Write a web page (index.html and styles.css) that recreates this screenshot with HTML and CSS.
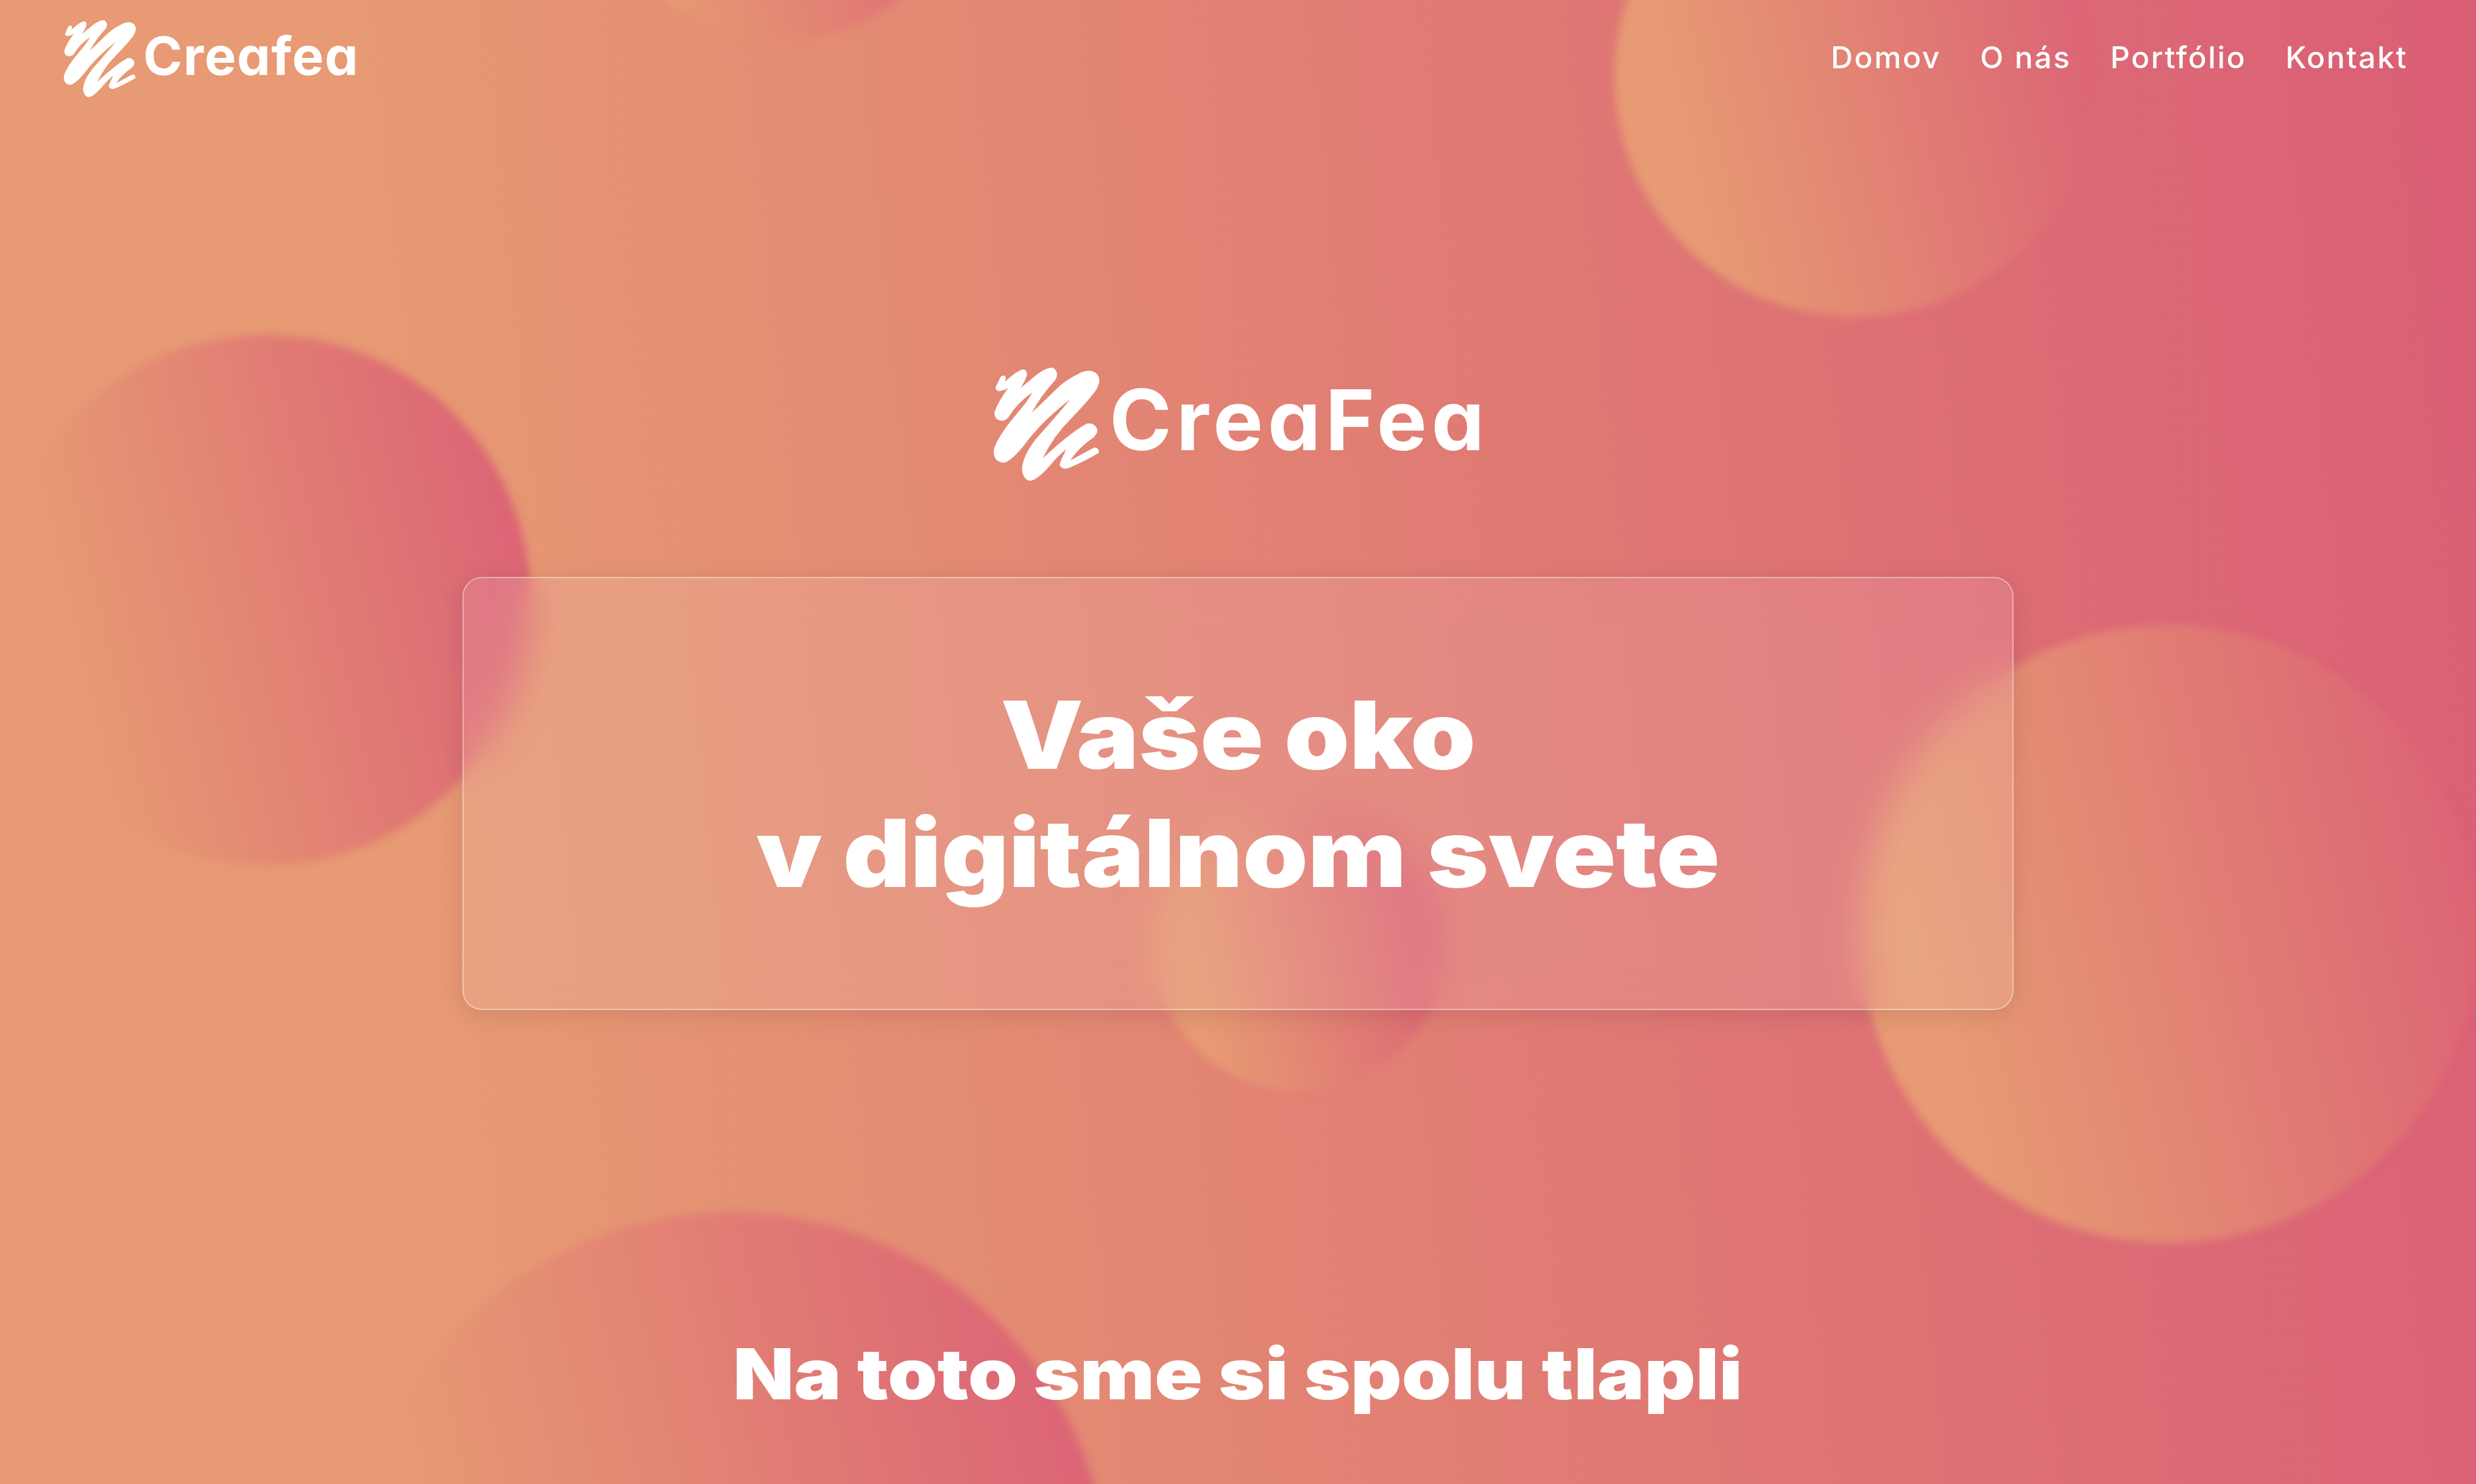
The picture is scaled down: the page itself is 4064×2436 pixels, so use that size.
FILE: index.html
```html
<!DOCTYPE html>
<html lang="sk">
<head>
    <meta charset="UTF-8">
    <meta name="viewport" content="width=device-width, initial-scale=1.0">
    <title>Creafea</title>
    <link rel="stylesheet" href="styles.css">
</head>
<body>
    <svg class="defs" width="0" height="0">
        <symbol id="scribble" viewBox="58 60 322 565" preserveAspectRatio="none">
            <path d="M90 103 Q80 104 76 125 L66 160 Q64 180 78 180 Q92 176 103 165 Q72 235 62 285 Q62 325 85 327 Q98 325 106 305 Q130 240 175 188 Q165 225 120 310 Q70 410 60 470 Q58 530 90 533 Q110 530 150 450 Q200 335 290 220 Q250 300 190 410 Q145 500 145 570 Q150 622 170 622 Q190 620 230 545 Q255 495 278 467 Q258 530 258 545 Q265 570 285 560 Q335 525 375 485 Q378 460 362 458 Q320 495 290 522 Q315 460 355 415 Q375 390 370 365 Q362 335 340 340 Q290 385 207 512 Q240 400 290 320 Q340 235 365 180 Q385 130 372 100 Q355 65 320 90 Q270 130 245 175 Q205 240 175 285 Q200 205 245 125 Q258 85 238 65 Q215 60 170 125 L140 165 Q155 130 160 100 Q160 70 145 74 Q125 85 93 135 Q100 108 90 103 Z"/>
        </symbol>
    </svg>

    <div class="page">
        <!-- background circles -->
        <div class="blob blob-top"></div>
        <div class="blob blob-corner"></div>
        <div class="blob blob-left"></div>
        <div class="blob blob-right"></div>
        <div class="blob blob-small"></div>
        <div class="blob blob-bottom"></div>

        <header class="topbar">
            <a class="logo logo-small" href="#">
                <svg class="logo-mark"><use href="#scribble"></use></svg>
                <span class="logo-text">Creafea</span>
            </a>
            <nav class="menu">
                <a href="#">Domov</a>
                <a href="#">O nás</a>
                <a href="#">Portfólio</a>
                <a href="#">Kontakt</a>
            </nav>
        </header>

        <main class="hero">
            <a class="logo logo-big" href="#">
                <svg class="logo-mark"><use href="#scribble"></use></svg>
                <span class="logo-text">CreaFea</span>
            </a>
            <section class="glass">
                <h1>Vaše oko<br>v digitálnom svete</h1>
            </section>
            <h2>Na toto sme si spolu tlapli</h2>
        </main>
    </div>
</body>
</html>
```

FILE: styles.css
```css
html, body{
    margin: 0;
    height: 100%;
}
body{
    font-family: "Inter", "Liberation Sans", sans-serif;
    color: white;
}
a{
    color: inherit;
    text-decoration: none;
}
.defs{
    position: absolute;
}
.page{
    position: relative;
    height: 100vh;
    overflow: hidden;
    background: linear-gradient(84deg, #e79a73 18%, #da5e75 100%);
}
.blob{
    position: absolute;
    border-radius: 50%;
    background: linear-gradient(77deg, #e79a73 18%, #da5e75 100%);
    filter: blur(7px);
}
.blob-top{
    left: 961px;
    top: -579px;
    width: 644px;
    height: 644px;
}
.blob-corner{
    left: 2650px;
    top: -270px;
    width: 790px;
    height: 790px;
}
.blob-left{
    left: 1px;
    top: 550px;
    width: 870px;
    height: 870px;
}
.blob-right{
    left: 3053px;
    top: 1026px;
    width: 1014px;
    height: 1014px;
}
.blob-small{
    left: 1894px;
    top: 1313px;
    width: 478px;
    height: 478px;
}
.blob-bottom{
    left: 580px;
    top: 1990px;
    width: 1240px;
    height: 1240px;
}
.topbar{
    position: relative;
    display: flex;
    justify-content: space-between;
    align-items: flex-start;
    padding: 32px 112px 0 104px;
}
.logo{
    display: flex;
    font-weight: 700;
    font-feature-settings: "cv11";
}
.logo-mark{
    fill: white;
    flex: none;
}
.logo-small{
    gap: 11px;
    font-size: 87px;
    line-height: 120px;
    letter-spacing: 1.5px;
}
.logo-small .logo-mark{
    width: 120px;
    height: 128px;
}
.logo-big{
    gap: 15px;
    margin-left: 10px;
    font-size: 138px;
    line-height: 174px;
    letter-spacing: 7.5px;
}
.logo-big .logo-mark{
    width: 176px;
    height: 188px;
}
.menu{
    display: flex;
    gap: 64px;
    font-size: 50px;
    font-weight: 500;
    line-height: 60px;
    letter-spacing: 2.5px;
    padding-top: 32px;
}
.hero{
    position: relative;
    display: flex;
    flex-direction: column;
    align-items: center;
    padding-top: 442px;
}
.glass{
    box-sizing: border-box;
    width: 2546px;
    height: 711px;
    margin-top: 157px;
    display: flex;
    align-items: center;
    justify-content: center;
    border: 2px solid rgba(255, 255, 255, 0.4);
    border-radius: 32px;
    background: rgba(255, 255, 255, 0.1);
    backdrop-filter: blur(30px);
    box-shadow: 0 8px 40px rgba(0, 0, 0, 0.1);
}
h1{
    margin: 0;
    font-size: 154px;
    font-weight: 900;
    line-height: 194px;
    text-align: center;
    transform: scaleX(1.112);
}
h2{
    margin: 527px 0 0;
    font-size: 116px;
    font-weight: 900;
    line-height: 140px;
    transform: scaleX(1.12);
}
```
